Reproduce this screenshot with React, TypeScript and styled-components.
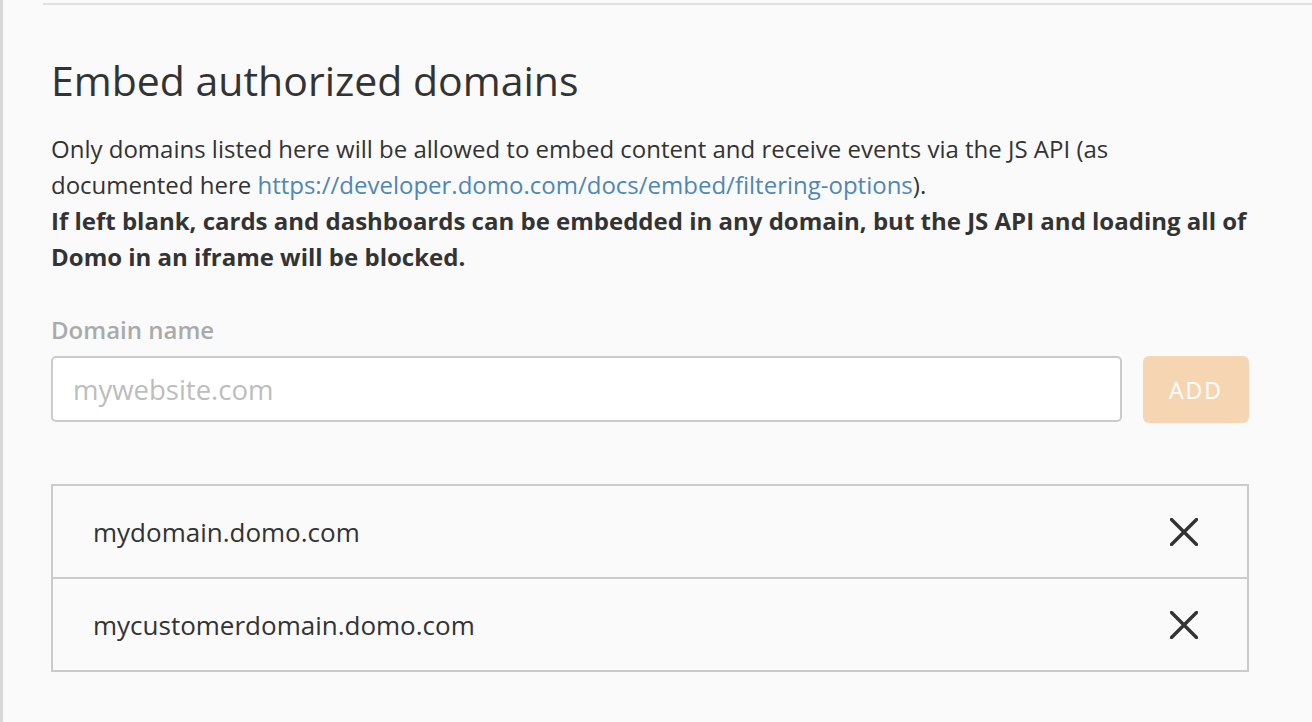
import styled, { createGlobalStyle } from "styled-components";

const GlobalStyle = createGlobalStyle`
  body {
    margin: 0;
    background: #fafafa;
    font-family: "Open Sans", "Liberation Sans", sans-serif;
    color: #333;
  }
`;

const Page = styled.div`
  min-height: 100vh;
  border-left: 3px solid #d8d8d8;
  box-sizing: border-box;
  padding-top: 3px;
`;

const Section = styled.section`
  margin-left: 40px;
  border-top: 2px solid #e0e0e0;
  padding: 0 63px 40px 8px;
`;

const Title = styled.h2`
  margin: 49px 0 0;
  font-size: 41px;
  font-weight: 400;
  line-height: 52px;
  color: #333;
`;

const Text = styled.p<{ $bold?: boolean }>`
  margin: 0;
  font-size: 24px;
  line-height: 36px;
  font-weight: ${(p) => (p.$bold ? 700 : 400)};
`;

const Intro = styled.div`
  margin-top: 25px;
`;

const Link = styled.a`
  color: #4f87b5;
  text-decoration: none;
`;

const Label = styled.label`
  display: block;
  margin-top: 40px;
  font-size: 24px;
  font-weight: 600;
  color: #aaa;
  line-height: 30px;
`;

const InputRow = styled.div`
  display: flex;
  gap: 21px;
  margin-top: 11px;
`;

const Input = styled.input`
  flex: 1;
  height: 66px;
  box-sizing: border-box;
  border: 2px solid #cbcbcb;
  border-radius: 5px;
  background: #fff;
  padding: 0 20px;
  font-family: inherit;
  font-size: 27.5px;
  color: #333;
  &::placeholder {
    color: #bdbdbd;
  }
`;

const AddButton = styled.button`
  width: 106px;
  height: 67px;
  border: none;
  border-radius: 6px;
  background: #f6d5b2;
  color: #fff;
  font-family: inherit;
  font-size: 23px;
  letter-spacing: 2px;
`;

const List = styled.ul`
  list-style: none;
  margin: 61px 0 0;
  padding: 0;
  border: 2px solid #cbcbcb;
`;

const Row = styled.li`
  display: flex;
  align-items: center;
  justify-content: space-between;
  height: 91px;
  padding: 0 48px 0 40px;
  font-size: 26px;
  & + & {
    border-top: 2px solid #cbcbcb;
  }
`;

const Remove = styled.button`
  border: none;
  background: none;
  padding: 0;
  width: 30px;
  height: 30px;
  display: flex;
  align-items: center;
  justify-content: center;
  color: #333;
`;

const CloseIcon = () => (
  <svg width="28" height="28" viewBox="0 0 28 28">
    <path d="M1.5 1.5 L26.5 26.5 M26.5 1.5 L1.5 26.5" stroke="currentColor" strokeWidth="3.4" strokeLinecap="round" />
  </svg>
);

const domains = ["mydomain.domo.com", "mycustomerdomain.domo.com"];

const App = () => {
  return (
    <Page>
      <GlobalStyle />
      <Section>
        <Title>Embed authorized domains</Title>
        <Intro>
          <Text>
            Only domains listed here will be allowed to embed content and receive events via the JS API (as
            documented here <Link href="#">https://developer.domo.com/docs/embed/filtering-options</Link>
            ).
          </Text>
          <Text $bold>
            If left blank, cards and dashboards can be embedded in any domain, but the JS API and loading all of
            Domo in an iframe will be blocked.
          </Text>
        </Intro>
        <Label>Domain name</Label>
        <InputRow>
          <Input placeholder="mywebsite.com" />
          <AddButton>ADD</AddButton>
        </InputRow>
        <List>
          {domains.map((d) => (
            <Row key={d}>
              {d}
              <Remove>
                <CloseIcon />
              </Remove>
            </Row>
          ))}
        </List>
      </Section>
    </Page>
  );
};

export default App;
